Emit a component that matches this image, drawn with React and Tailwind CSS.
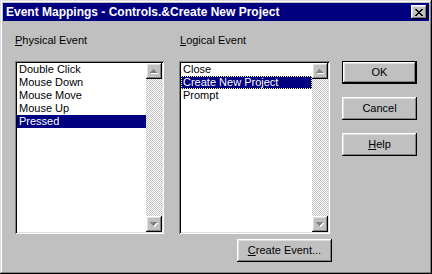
import React from 'react';

const raised = 'shadow-[inset_-1px_-1px_#000,inset_1px_1px_#fff,inset_-2px_-2px_#808080,inset_2px_2px_#dfdfdf]';
const sunken = 'shadow-[inset_1px_1px_#808080,inset_-1px_-1px_#fff,inset_2px_2px_#000,inset_-2px_-2px_#dfdfdf]';

function CloseGlyph() {
  return (
    <svg width="8" height="7" viewBox="0 0 8 7" shapeRendering="crispEdges">
      <path
        fill="#000"
        d="M0 0h2v1H0zM6 0h2v1H6zM1 1h2v1H1zM5 1h2v1H5zM2 2h4v1H2zM3 3h2v1H3zM2 4h4v1H2zM1 5h2v1H1zM5 5h2v1H5zM0 6h2v1H0zM6 6h2v1H6z"
      />
    </svg>
  );
}

function Arrow({ down }) {
  const up = 'M3 0h1v1H3zM2 1h3v1H2zM1 2h5v1H1zM0 3h7v1H0z';
  const dn = 'M0 0h7v1H0zM1 1h5v1H1zM2 2h3v1H2zM3 3h1v1H3z';
  const d = down ? dn : up;
  return (
    <svg width="8" height="5" viewBox="0 0 8 5" shapeRendering="crispEdges">
      <path fill="#fff" d={d} transform="translate(1 1)" />
      <path fill="#808080" d={d} />
    </svg>
  );
}

function ScrollBar() {
  return (
    <div className="w-[16px] flex flex-col bg-[repeating-conic-gradient(#c0c0c0_0_25%,#fff_0_50%)] bg-[length:2px_2px]">
      <div className={`h-[16px] w-[16px] bg-[#c0c0c0] flex items-center justify-center ${raised}`}>
        <Arrow />
      </div>
      <div className="flex-1" />
      <div className={`h-[16px] w-[16px] bg-[#c0c0c0] flex items-center justify-center ${raised}`}>
        <Arrow down />
      </div>
    </div>
  );
}

function ListBox({ items, selected, focused, width }) {
  return (
    <div className={`h-[173px] bg-white p-[2px] flex ${sunken} ${width}`}>
      <div className="flex-1 flex flex-col">
        {items.map((it, i) => (
          <div
            key={it}
            className={`h-[13px] leading-[13px] pl-[2px] ${
              i === selected ? 'bg-[#000080] text-white' : 'text-black'
            } ${i === selected && focused ? 'outline outline-1 outline-dotted outline-[#ffff80] -outline-offset-1' : ''}`}
          >
            {it}
          </div>
        ))}
      </div>
      <ScrollBar />
    </div>
  );
}

function Button({ children, isDefault, className = '' }) {
  return (
    <div
      className={`h-[23px] bg-[#c0c0c0] flex items-center justify-center text-black ${
        isDefault ? 'border border-black' : ''
      } ${className}`}
    >
      <div className={`w-full h-full flex items-center justify-center ${raised}`}>{children}</div>
    </div>
  );
}

export default function App() {
  return (
    <div
      className={`w-[432px] h-[274px] bg-[#c0c0c0] flex flex-col text-[11px] shadow-[inset_-1px_-1px_#000,inset_1px_1px_#dfdfdf,inset_-2px_-2px_#808080,inset_2px_2px_#fff]`}
      style={{ fontFamily: '"Liberation Sans", Arial, sans-serif' }}
    >
      <div className="mx-[3px] mt-[3px] h-[18px] bg-[#000080] flex items-center justify-between pl-[3px] pr-[2px]">
        <span className="text-white font-bold text-[12px]">
          Event Mappings - Controls.&amp;Create New Project
        </span>
        <div className={`w-[16px] h-[14px] bg-[#c0c0c0] flex items-center justify-center ${raised}`}>
          <CloseGlyph />
        </div>
      </div>

      <div className="flex pl-[15px] pt-[13px]">
        <div className="w-[149px] flex flex-col">
          <div className="h-[13px] leading-[13px] text-black">
            <span className="underline">P</span>hysical Event
          </div>
          <div className="mt-[14px]">
            <ListBox
              width="w-[149px]"
              items={['Double Click', 'Mouse Down', 'Mouse Move', 'Mouse Up', 'Pressed']}
              selected={4}
            />
          </div>
        </div>

        <div className="w-[151px] ml-[15px] flex flex-col">
          <div className="h-[13px] leading-[13px] text-black pl-[1px]">
            <span className="underline">L</span>ogical Event
          </div>
          <div className="mt-[14px]">
            <ListBox
              width="w-[151px]"
              items={['Close', 'Create New Project', 'Prompt']}
              selected={1}
              focused
            />
          </div>
          <div className="flex justify-end mt-[5px] -mr-[2px]">
            <Button className="w-[95px]">
              <span>
                <span className="underline">C</span>reate Event...
              </span>
            </Button>
          </div>
        </div>

        <div className="w-[75px] ml-[12px] mt-[27px] flex flex-col gap-[13px]">
          <Button isDefault>OK</Button>
          <Button>Cancel</Button>
          <Button>
            <span>
              <span className="underline">H</span>elp
            </span>
          </Button>
        </div>
      </div>
    </div>
  );
}
